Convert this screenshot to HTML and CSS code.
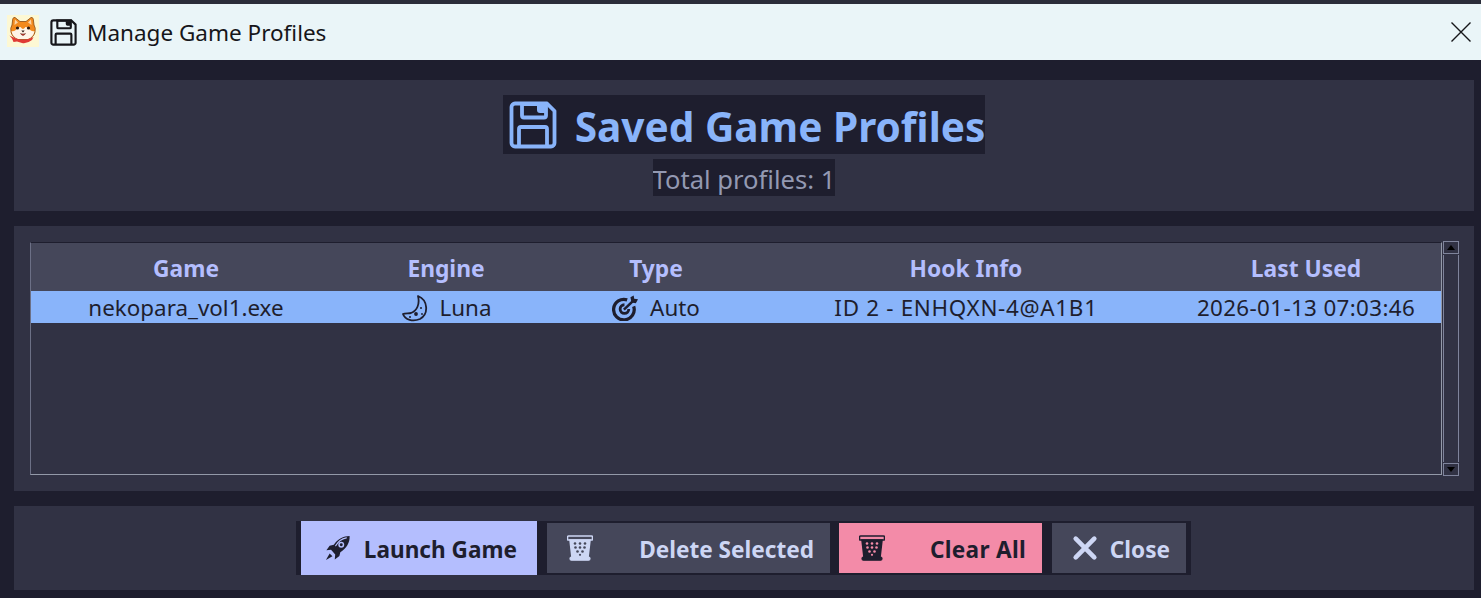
FILE: index.html
```html
<!DOCTYPE html>
<html lang="en">
<head>
<meta charset="utf-8">
<title>Manage Game Profiles</title>
<link rel="stylesheet" href="styles.css">
</head>
<body>
<svg class="defs" width="0" height="0" aria-hidden="true">
  <defs>
    <symbol id="floppy" viewBox="0 0 48 48">
      <path d="M6 2.500H38L45.500 10V42A3.500 3.500 0 0 1 42 45.500H6A3.500 3.500 0 0 1 2.500 42V6A3.500 3.500 0 0 1 6 2.500Z" fill="none" stroke="currentColor" stroke-width="3.800" stroke-linejoin="round"/>
      <path d="M13 3V14.500A2 2 0 0 0 15 16.500H35A2 2 0 0 0 37 14.500V3Z" fill="none" stroke="currentColor" stroke-width="3.800"/>
      <path d="M28 4H36V12L31 12A3 3 0 0 1 28 9Z" fill="currentColor"/>
      <path d="M10 45V28A2 2 0 0 1 12 26H36A2 2 0 0 1 38 28V45" fill="none" stroke="currentColor" stroke-width="3.800"/>
    </symbol>
    <symbol id="bin" viewBox="0 0 26 26">
      <path d="M1.500 1H24.500A1 1 0 0 1 25.500 2V4A1 1 0 0 1 24.500 5H1.500A1 1 0 0 1 0.500 4V2A1 1 0 0 1 1.500 1Z" fill="none" stroke="currentColor" stroke-width="1.600"/>
      <path d="M3 5L5 22.500H21L23 5Z" fill="var(--bin-fill)" stroke="currentColor" stroke-width="1.600"/>
      <rect x="3" y="22" width="20" height="3.200" rx="1.500" fill="var(--bin-fill)" stroke="currentColor" stroke-width="1.200"/>
      <g fill="var(--bin-dot)">
        <circle cx="8" cy="8.500" r="1.300"/><circle cx="13" cy="8.500" r="1.300"/><circle cx="18" cy="8.500" r="1.300"/>
        <circle cx="8.500" cy="12.500" r="1.300"/><circle cx="13" cy="12.500" r="1.300"/><circle cx="17.500" cy="12.500" r="1.300"/>
        <circle cx="10.500" cy="16.500" r="1.300"/><circle cx="15.500" cy="16.500" r="1.300"/>
        <circle cx="13" cy="19.800" r="1.100"/>
      </g>
    </symbol>
  </defs>
</svg>

<header class="titlebar">
  <svg class="app-icon" viewBox="0 0 32 32" aria-hidden="true">
    <rect width="32" height="32" fill="#fdf8d4"/>
    <path d="M8 2.500L13 6.500H19L24 2.500Q26.500 2 26.500 6L27 10Q29 13 28 17Q27 22 21 24.500H11Q5 22 4 17Q3 13 5 10L5.500 6Q5.500 2 8 2.500Z" fill="#f28a1e" stroke="#8a4a12" stroke-width="0.800"/>
    <path d="M8 4.500L11 7.500L7.500 10Z" fill="#fcd3a4"/>
    <path d="M24 4.500L21 7.500L24.500 10Z" fill="#fcd3a4"/>
    <path d="M4.500 16Q8 17 11 12.500L13.500 12Q15 14 16 14Q17 14 18.500 12L21 12.500Q24 17 27.500 16Q26.500 22 21 24H11Q5.500 22 4.500 16Z" fill="#fff4e6"/>
    <circle cx="10.500" cy="13" r="1.600" fill="#2a1a12"/>
    <circle cx="21.500" cy="13" r="1.600" fill="#2a1a12"/>
    <path d="M14.300 15.500H17.700L16 17.500Z" fill="#2a1a12"/>
    <path d="M13.500 18.500Q16 22.500 18.500 18.500Q16 19.500 13.500 18.500Z" fill="#d23a2e" stroke="#5a2218" stroke-width="0.500"/>
    <path d="M2.500 20.500L9 23.500Q16 26 23 23.500L26.500 22L25 25Q20 29 15 28L10 26.500L6.500 27L5 23.500Z" fill="#e03a34"/>
  </svg>
  <svg class="title-floppy"><use href="#floppy"/></svg>
  <span class="title-text">Manage Game Profiles</span>
  <svg class="title-close" viewBox="0 0 20 20" aria-hidden="true"><path d="M0.500 0.500L19.500 19.500M19.500 0.500L0.500 19.500" stroke="#16161a" stroke-width="1.400" fill="none"/></svg>
</header>

<main class="dialog">
  <section class="panel header-panel">
    <h1 class="heading"><svg class="heading-icon"><use href="#floppy"/></svg><span class="heading-text">Saved Game Profiles</span></h1>
    <p class="subheading">Total profiles: 1</p>
  </section>

  <section class="panel list-panel">
    <div class="table">
      <div class="row head">
        <div>Game</div><div>Engine</div><div>Type</div><div>Hook Info</div><div>Last Used</div>
      </div>
      <div class="row selected">
        <div>nekopara_vol1.exe</div>
        <div class="with-icon">
          <svg class="cell-icon" viewBox="0 0 28 28" aria-hidden="true">
            <path d="M17 2C27 6 28 20 19 25C12 28 4 26 2 20C4 19 7 19.500 10 19C16 17 19 10 17 2Z" fill="none" stroke="#1e1e2e" stroke-width="1.800" stroke-linejoin="round"/>
            <circle cx="15" cy="20" r="1.900" fill="#1e1e2e"/><circle cx="20" cy="14" r="1" fill="#1e1e2e"/><circle cx="9" cy="23" r="1" fill="#1e1e2e"/><circle cx="21" cy="20" r="0.900" fill="#1e1e2e"/>
          </svg>
          <span>Luna</span>
        </div>
        <div class="with-icon wide-gap">
          <svg class="cell-icon small" viewBox="0 0 24 24" aria-hidden="true">
            <path d="M14 4.500A9.500 9.500 0 1 0 20 10.500" fill="none" stroke="#1e1e2e" stroke-width="3"/>
            <path d="M11.500 9A4 4 0 1 0 15.500 13" fill="none" stroke="#1e1e2e" stroke-width="2.600"/>
            <path d="M11 13.500L20 5" stroke="#1e1e2e" stroke-width="2.400" fill="none"/>
            <path d="M17 2L20 0.500L20.500 3.500L24 4L22 7.500L18 7Z" fill="#1e1e2e"/>
          </svg>
          <span>Auto</span>
        </div>
        <div class="hook">ID 2 - ENHQXN-4@A1B1</div>
        <div class="stamp">2026-01-13 07:03:46</div>
      </div>
    </div>
    <div class="scrollbar">
      <div class="scroll-btn"><span class="arrow up"></span></div>
      <div class="scroll-track"></div>
      <div class="scroll-btn"><span class="arrow down"></span></div>
    </div>
  </section>

  <section class="panel button-panel">
    <div class="button-group">
      <button class="btn launch" type="button">
        <svg class="btn-icon" viewBox="0 0 28 28" aria-hidden="true">
          <path d="M26.500 1C20 1 13.500 4 9.500 10.500L5 11.500L1.500 16.500L6.500 16L11 21L10.500 26.500L15.500 22.500L16.500 18.500C23 14.500 27 8 26.500 1Z" fill="#1e1e2e"/>
          <path d="M23 3C18 4 14 7 11.500 11.500" fill="none" stroke="#b4befe" stroke-width="1.300" stroke-linecap="round"/>
          <circle cx="17.500" cy="10.500" r="3.200" fill="#b4befe"/>
          <circle cx="17.500" cy="10.500" r="1.600" fill="#1e1e2e"/>
          <path d="M5 20L1 27L8 23Z" fill="#1e1e2e"/>
        </svg>
        <span>Launch Game</span>
      </button>
      <button class="btn neutral delete" type="button">
        <svg class="btn-icon bin-light"><use href="#bin"/></svg>
        <span>Delete Selected</span>
      </button>
      <button class="btn danger" type="button">
        <svg class="btn-icon bin-dark"><use href="#bin"/></svg>
        <span class="clear-label">Clear All</span>
      </button>
      <button class="btn neutral close" type="button">
        <svg class="btn-icon" viewBox="0 0 28 28" aria-hidden="true"><path d="M4 4L24 24M24 4L4 24" stroke="#cdd6f4" stroke-width="5" stroke-linecap="round" fill="none"/></svg>
        <span>Close</span>
      </button>
    </div>
  </section>
</main>
</body>
</html>
```

FILE: styles.css
```css
* { box-sizing: border-box; }

html, body {
  margin: 0;
  height: 100%;
  overflow: hidden;
}

body {
  display: flex;
  flex-direction: column;
  background: #1e1e2e;
  color: #cdd6f4;
  font-family: "Noto Sans", "Open Sans", sans-serif;
}

.defs { display: block; height: 0; }

.titlebar {
  flex: none;
  display: flex;
  align-items: center;
  height: 60px;
  padding: 4px 10px 0 7px;
  background: linear-gradient(#2b2d3a 0, #2b2d3a 4px, #eaf5f8 4px);
  color: #16161a;
}

.app-icon { width: 32px; height: 32px; flex: none; margin-bottom: 2px; }
.title-floppy { width: 27px; height: 27px; margin-left: 11px; flex: none; color: #16161a; }
.title-text { margin: 2px 0 0 10px; font-size: 22.500px; line-height: 32px; }
.title-close { width: 20px; height: 20px; margin-left: auto; flex: none; }

.dialog {
  flex: 1;
  display: flex;
  flex-direction: column;
  gap: 15px;
  padding: 20px 7px 8px 14px;
  min-height: 0;
}

.panel { background: #313244; }

.header-panel {
  height: 131px;
  display: flex;
  flex-direction: column;
  align-items: center;
  padding-top: 15px;
}

.heading {
  display: flex;
  align-items: center;
  gap: 18px;
  margin: 0;
  height: 59px;
  padding: 0 0 0 6px;
  background: #1e1e2e;
  color: #89b4fa;
  font-size: 40.600px;
  font-weight: 700;
  line-height: 59px;
  white-space: nowrap;
}

.heading-text { padding-top: 3px; }

.heading-icon { width: 48px; height: 48px; flex: none; }

.subheading {
  margin: 5px 0 0;
  height: 37px;
  padding-top: 2px;
  background: #1e1e2e;
  color: #9399b2;
  font-size: 25.600px;
  line-height: 37px;
  overflow: hidden;
}

.list-panel {
  height: 265px;
  display: flex;
  padding: 16px 15px 16px 16px;
}

.table {
  flex: 1;
  margin-right: 1px;
  border: 1px solid #9399a8;
  border-top-color: #1e1e2e;
  border-left-color: #6c7086;
}

.row {
  display: grid;
  grid-template-columns: 310px 210px 210px 410px 1fr;
  align-items: center;
  text-align: center;
}

.head {
  height: 48px;
  padding-top: 3px;
  background: #45475a;
  color: #b4befe;
  font-size: 22.800px;
  font-weight: 700;
}

.selected {
  height: 32px;
  padding-top: 1px;
  background: #89b4fa;
  color: #1e1e2e;
  font-size: 22.400px;
}

.hook { letter-spacing: 0.700px; }
.stamp { letter-spacing: 0.350px; }

.with-icon {
  display: flex;
  align-items: center;
  justify-content: center;
  gap: 11px;
}

.wide-gap { gap: 12px; }

.cell-icon { width: 28px; height: 28px; flex: none; }
.cell-icon.small { width: 26px; height: 26px; }

.scrollbar {
  width: 16px;
  display: flex;
  flex-direction: column;
  margin-top: -1px;
  margin-bottom: -1px;
}

.scroll-btn {
  flex: none;
  height: 13px;
  display: flex;
  align-items: center;
  justify-content: center;
  border: 1px solid #7f849c;
  background: #313244;
}

.scroll-track {
  flex: 1;
  border: 1px solid #7f849c;
  border-top: 0;
  border-bottom: 0;
  margin: 1px 0;
  background: #313244;
}

.arrow {
  width: 0;
  height: 0;
  border-left: 4px solid transparent;
  border-right: 4px solid transparent;
}
.arrow.up { border-bottom: 5px solid #000; }
.arrow.down { border-top: 5px solid #000; }

.button-panel {
  height: 84px;
  display: flex;
  justify-content: center;
  padding-top: 15px;
}

.button-group {
  display: flex;
  gap: 10px;
  height: 54px;
  padding: 2px 5px;
  background: #1e1e2e;
  margin-left: -1px;
}

.btn {
  display: flex;
  align-items: center;
  justify-content: space-between;
  height: 50px;
  border: 0;
  padding: 2px 16px 0 18px;
  font-family: inherit;
  font-size: 22.600px;
  font-weight: 700;
  white-space: nowrap;
}

.btn-icon { width: 26px; height: 26px; flex: none; margin-top: -3px; }

.launch {
  width: 236px;
  height: 54px;
  margin-top: -2px;
  background: #b4befe;
  color: #1e1e2e;
  padding: 2px 20px 0 24px;
}

.neutral { background: #45475a; color: #cdd6f4; }
.delete { width: 283px; margin-right: -1px; padding-left: 20px; }
.close { width: 134px; padding: 2px 16px 0 20px; }

.danger { width: 203px; background: #f38ba8; color: #1e1e2e; padding-left: 20px; }
.clear-label { letter-spacing: 0.300px; }

.bin-light { color: #cdd6f4; --bin-fill: #cdd6f4; --bin-dot: #45475a; }
.bin-dark { color: #1e1e2e; --bin-fill: #1e1e2e; --bin-dot: #f38ba8; }
```
